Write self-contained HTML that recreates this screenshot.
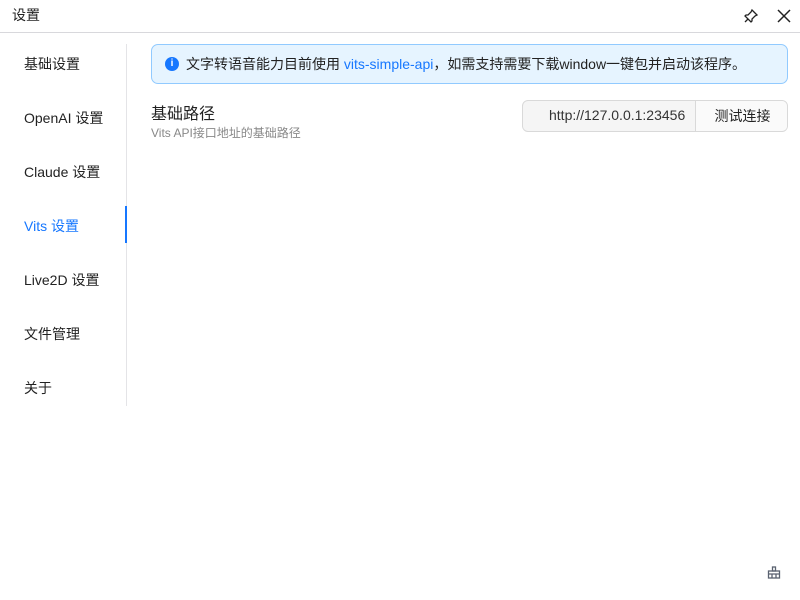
<!DOCTYPE html>
<html><head><meta charset="utf-8"><style>
*{margin:0;padding:0;box-sizing:border-box}
body{width:800px;height:600px;background:#fff;font-family:"Liberation Sans","Noto Sans CJK SC",sans-serif;color:#222;position:relative;overflow:hidden;font-size:14px}
.title{position:absolute;left:12px;top:5px;font-size:14px}
.hl{position:absolute;left:0;top:32px;width:800px;height:1px;background:#d8d8dc}
.side{position:absolute;left:126px;top:44px;width:1px;height:362px;background:#e4e4e7}
.nav{position:absolute;left:24px;font-size:14px;color:#222}
.act{color:#1677ff}
.bar{position:absolute;left:125px;top:206px;width:2px;height:37px;background:#1677ff}
.alert{position:absolute;left:151px;top:44px;width:637px;height:40px;background:#e6f4ff;border:1px solid #91caff;border-radius:7px}
.alert .i{position:absolute;left:13px;top:12px;width:14px;height:14px;border-radius:50%;background:#1677ff;color:#fff;font-size:10px;font-weight:bold;text-align:center;line-height:14px}
.alert .t{position:absolute;left:34px;top:9px;font-size:14px}
.alert a{color:#1677ff}
.lab{position:absolute;left:151px;top:100px;font-size:16px}
.sub{position:absolute;left:151px;top:124px;font-size:12px;color:#888}
.inp{position:absolute;left:522px;top:100px;width:266px;height:32px;border:1px solid #d9d9d9;border-radius:6px;background:#f5f5f5;overflow:hidden}
.inp .v{position:absolute;left:26px;top:6px;font-size:14px;color:#333}
.inp .b{position:absolute;left:172px;top:0;width:94px;height:30px;border-left:1px solid #d9d9d9;background:#fafafa;text-align:center;line-height:30px;font-size:14px}
</style></head><body>
<div class="title">设置</div>
<svg style="position:absolute;left:743px;top:8px" width="16" height="16" viewBox="0 0 16 16" fill="none" stroke="#222" stroke-width="1.3"><path d="M9 2l5 5-2 1-3 3 0 2-1 1-6-6 1-1 2 0 3-3z M5 11l-3 3"/></svg>
<svg style="position:absolute;left:777px;top:9px" width="14" height="14" viewBox="0 0 14 14" stroke="#222" stroke-width="1.5"><path d="M1 1l12 12M13 1L1 13"/></svg>
<div class="hl"></div>
<div class="side"></div>
<div class="nav" style="top:54px">基础设置</div>
<div class="nav" style="top:108px">OpenAI 设置</div>
<div class="nav" style="top:162px">Claude 设置</div>
<div class="nav act" style="top:216px">Vits 设置</div>
<div class="nav" style="top:270px">Live2D 设置</div>
<div class="nav" style="top:324px">文件管理</div>
<div class="nav" style="top:378px">关于</div>
<div class="bar"></div>
<div class="alert"><div class="i">i</div><div class="t">文字转语音能力目前使用 <a>vits-simple-api</a>，如需支持需要下载window一键包并启动该程序。</div></div>
<div class="lab">基础路径</div>
<div class="sub">Vits API接口地址的基础路径</div>
<div class="inp"><div class="v">http://127.0.0.1:23456</div><div class="b">测试连接</div></div>
<svg style="position:absolute;left:767px;top:566px" width="14" height="14" viewBox="0 0 14 14" fill="none" stroke="#5a6270" stroke-width="1.3"><rect x="5.5" y="1" width="3" height="4"/><rect x="1.5" y="5" width="11" height="7"/><path d="M1.5 8h11M5 8v4M9 8v4"/></svg>
</body></html>
